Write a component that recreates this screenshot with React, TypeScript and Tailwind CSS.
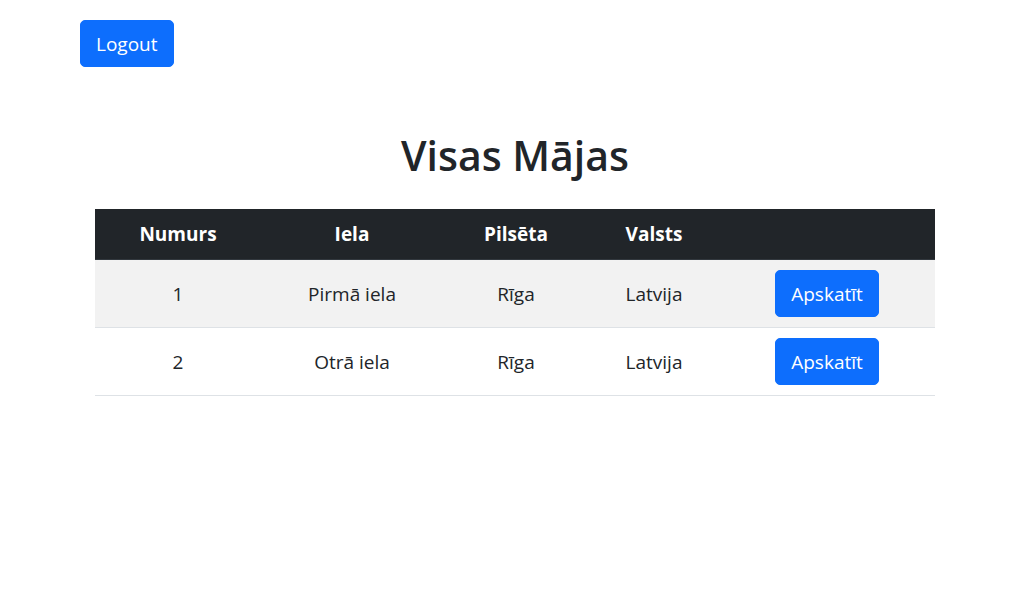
import React from "react";

const rows = [
  { n: "1", iela: "Pirmā iela", p: "Rīga", v: "Latvija" },
  { n: "2", iela: "Otrā iela", p: "Rīga", v: "Latvija" },
];

export default function App() {
  const font = { fontFamily: '"Open Sans", "Noto Sans", sans-serif' };
  return (
    <div className="min-h-[601px] bg-white text-[#212529]" style={font}>
      <div className="pt-[20px] pl-[80px]">
        <button className="h-[47px] rounded-[5px] border border-[#0d6efd] bg-[#0d6efd] px-[15px] pt-[1px] text-[19px] leading-[30px] text-white">
          Logout
        </button>
      </div>
      <div className="ml-[95px] w-[840px]">
        <h1 className="mt-[58px] mb-[24px] text-center text-[41px] font-semibold leading-[60px]">
          Visas Mājas
        </h1>
        <table className="w-full border-collapse text-center text-[19px] leading-[30px]">
          <colgroup>
            <col className="w-[166px]" />
            <col className="w-[182px]" />
            <col className="w-[146px]" />
            <col className="w-[130px]" />
            <col className="w-[216px]" />
          </colgroup>
          <thead>
            <tr className="border-b border-[#32383e] bg-[#212529] text-white">
              <th className="p-[10px] font-bold">Numurs</th>
              <th className="p-[10px] font-bold">Iela</th>
              <th className="p-[10px] font-bold">Pilsēta</th>
              <th className="p-[10px] font-bold">Valsts</th>
              <th className="p-[10px]"></th>
            </tr>
          </thead>
          <tbody>
            {rows.map((r, i) => (
              <tr
                key={r.n}
                className={
                  i % 2 === 0
                    ? "border-b border-[#dee2e6] bg-[#f2f2f2]"
                    : "border-b border-[#dee2e6] bg-white"
                }
              >
                <td className="p-[10px]">{r.n}</td>
                <td className="p-[10px]">{r.iela}</td>
                <td className="p-[10px]">{r.p}</td>
                <td className="p-[10px]">{r.v}</td>
                <td className="p-[10px]">
                  <button className="h-[47px] rounded-[5px] border border-[#0d6efd] bg-[#0d6efd] px-[15px] align-middle text-[19px] leading-[30px] text-white">
                    Apskatīt
                  </button>
                </td>
              </tr>
            ))}
          </tbody>
        </table>
      </div>
    </div>
  );
}
